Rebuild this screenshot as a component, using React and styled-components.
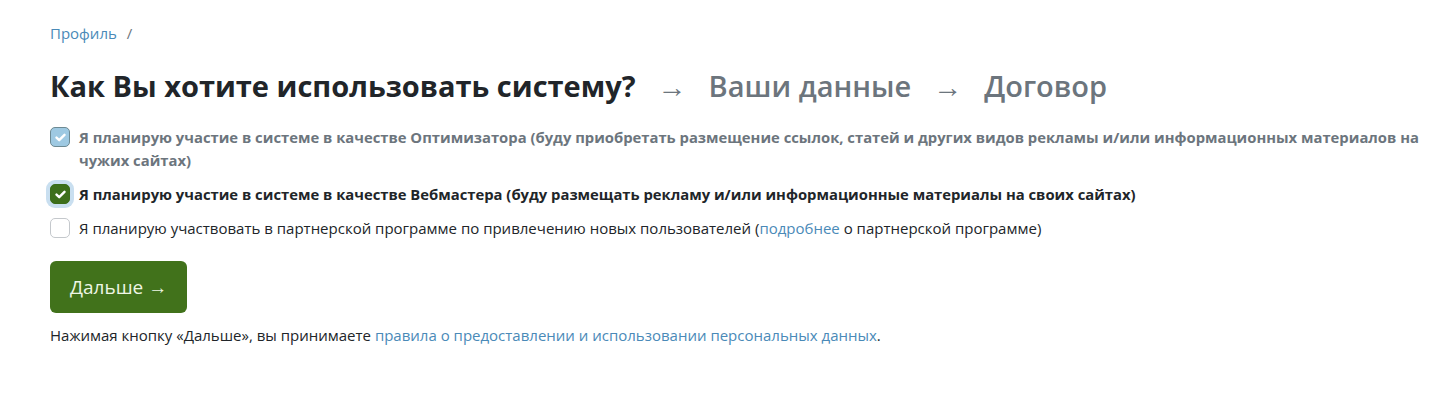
import React from 'react';
import styled, { createGlobalStyle } from 'styled-components';

const GlobalStyle = createGlobalStyle`
  html, body {
    margin: 0;
    padding: 0;
    background: #fff;
  }
  body {
    font-family: "Open Sans", "Noto Sans", sans-serif;
    font-size: 15px;
    line-height: 1.6;
    color: #212529;
  }
`;

const Page = styled.div`
  padding: 21px 14px 40px 50px;
`;

const Breadcrumb = styled.nav`
  display: flex;
  align-items: center;
  gap: 10px;
  font-size: 15px;
  line-height: 24px;
  color: #6c757d;
`;

const Link = styled.a`
  color: #4a8ab8;
  text-decoration: none;
`;

const Heading = styled.h1`
  display: flex;
  align-items: baseline;
  gap: 22px;
  margin: 21px 0 20px;
  font-size: 29px;
  line-height: 40px;
  font-weight: 700;
  color: #212529;
`;

const Step = styled.span`
  color: ${(p) => (p.$active ? '#212529' : '#6c757d')};
  font-weight: ${(p) => (p.$active ? 700 : 600)};
`;

const Arrow = styled.span`
  color: #6c757d;
  font-weight: 400;
`;

const Options = styled.div`
  display: flex;
  flex-direction: column;
  gap: 11px;
`;

const Option = styled.label`
  display: flex;
  align-items: flex-start;
  gap: 9px;
  line-height: 23px;
  font-size: ${(p) => (p.$bold ? '14.8px' : '15px')};
  font-weight: ${(p) => (p.$bold ? 700 : 400)};
  color: ${(p) => (p.$muted ? '#6c757d' : '#212529')};
`;

const Box = styled.span`
  flex: none;
  width: 20px;
  height: 20px;
  margin-top: 1px;
  box-sizing: border-box;
  border-radius: 5px;
  display: flex;
  align-items: center;
  justify-content: center;
  border: 1px solid
    ${(p) => (p.$variant === 'disabled' ? '#6d8a93' : p.$variant === 'checked' ? '#3b6d1a' : '#c4c8cc')};
  background: ${(p) =>
    p.$variant === 'disabled' ? '#9ec9e2' : p.$variant === 'checked' ? '#3d6f1b' : '#fff'};
  box-shadow: ${(p) => (p.$focus ? '0 0 0 4px #c9dff0' : 'none')};
`;

const Button = styled.button`
  margin-top: 21px;
  height: 52px;
  padding: 0 20px;
  border: none;
  border-radius: 6px;
  background: #41721b;
  color: #eef6e6;
  font-family: inherit;
  font-size: 19px;
  font-weight: 500;
  cursor: pointer;
`;

const Note = styled.p`
  margin: 10px 0 0;
  line-height: 24px;
`;

const Check = () => (
  <svg width="11" height="9" viewBox="0 0 11 9" fill="none">
    <path d="M1.5 4.6 4.2 7.2 9.5 1.8" stroke="#fff" strokeWidth="2.4" strokeLinecap="round" strokeLinejoin="round" />
  </svg>
);

const Checkbox = ({ variant, focus }) => (
  <Box $variant={variant} $focus={focus}>
    {variant !== 'empty' && <Check />}
  </Box>
);

export default function App() {
  return (
    <>
      <GlobalStyle />
      <Page>
        <Breadcrumb>
          <Link href="#">Профиль</Link>
          <span>/</span>
        </Breadcrumb>
        <Heading>
          <Step $active>Как Вы хотите использовать систему?</Step>
          <Arrow>→</Arrow>
          <Step>Ваши данные</Step>
          <Arrow>→</Arrow>
          <Step>Договор</Step>
        </Heading>
        <Options>
          <Option $bold $muted>
            <Checkbox variant="disabled" />
            <span>
              Я планирую участие в системе в качестве Оптимизатора (буду приобретать размещение ссылок, статей и других видов рекламы и/или информационных материалов на чужих сайтах)
            </span>
          </Option>
          <Option $bold>
            <Checkbox variant="checked" focus />
            <span>
              Я планирую участие в системе в качестве Вебмастера (буду размещать рекламу и/или информационные материалы на своих сайтах)
            </span>
          </Option>
          <Option>
            <Checkbox variant="empty" />
            <span>
              Я планирую участвовать в партнерской программе по привлечению новых пользователей (<Link href="#">подробнее</Link> о партнерской программе)
            </span>
          </Option>
        </Options>
        <Button>Дальше →</Button>
        <Note>
          Нажимая кнопку «Дальше», вы принимаете <Link href="#">правила о предоставлении и использовании персональных данных</Link>.
        </Note>
      </Page>
    </>
  );
}
